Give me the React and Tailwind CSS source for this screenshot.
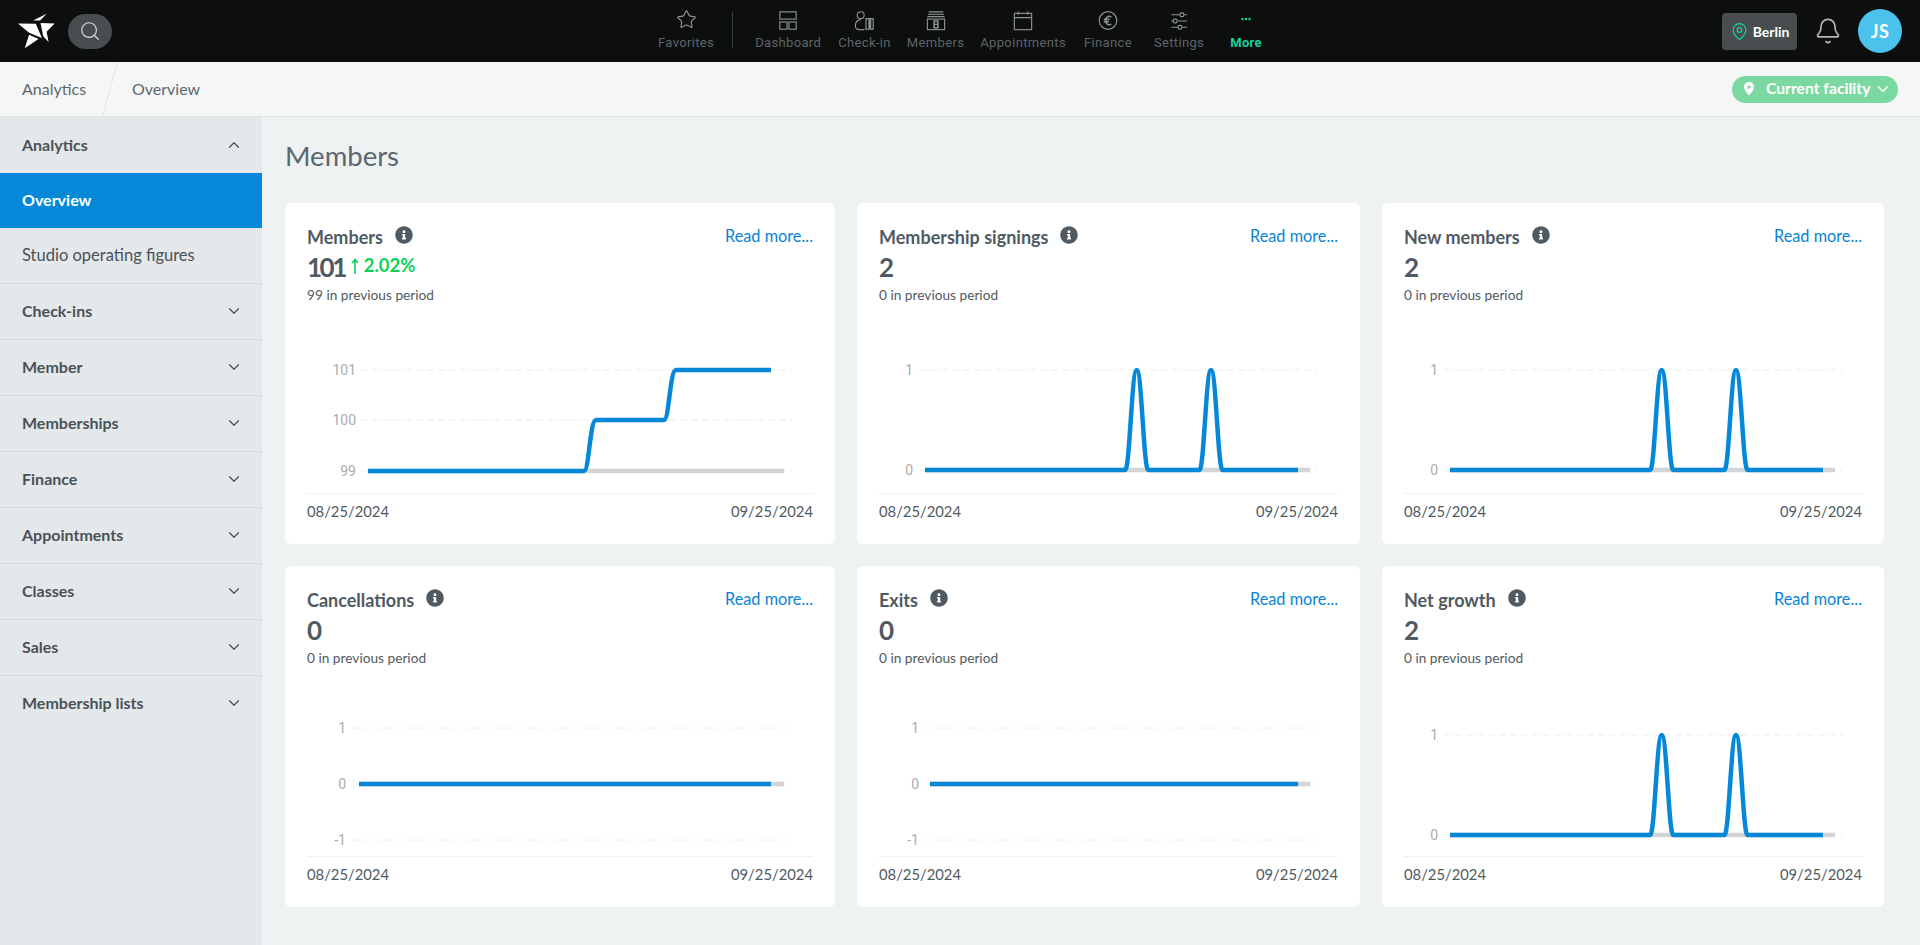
import { Star, ChevronDown, ChevronUp, Search, Bell, MapPin } from 'lucide-react';
import { FaInfoCircle } from 'react-icons/fa';

const sans = "font-['Lato','Noto_Sans',sans-serif]";

const stepLine = (x0, x1, y0, y1, y2) =>
  `M61 ${y0} L${x0} ${y0} C${x0 + 5} ${y0} ${x0 + 6} ${y1} ${x0 + 12} ${y1} L${x1} ${y1} C${x1 + 5} ${y1} ${x1 + 6} ${y2} ${x1 + 12} ${y2} L464 ${y2}`;

const spike = (c, top, base) =>
  `L${c - 11.5} ${base} C${c - 7} ${base} ${c - 5} ${top} ${c} ${top} C${c + 5} ${top} ${c + 7} ${base} ${c + 11.5} ${base}`;

const spikes = (top, base) =>
  `M46 ${base} ${spike(257.7, top, base)} ${spike(332, top, base)} L419 ${base}`;

const cards = [
  {
    title: 'Members',
    value: '101',
    delta: '2.02%',
    prev: '99 in previous period',
    chart: {
      labels: [['101', 64], ['100', 114], ['99', 165]],
      labelEnd: 49, gridStart: 54, gridEnd: 485, lineStart: 61, greyEnd: 477, base: 165,
      d: stepLine(277, 357, 165, 114, 64),
    },
  },
  {
    title: 'Membership signings',
    value: '2',
    prev: '0 in previous period',
    chart: {
      labels: [['1', 64], ['0', 164]],
      labelEnd: 34, gridStart: 40, gridEnd: 439, lineStart: 46, greyEnd: 431, base: 164,
      d: spikes(64, 164),
    },
  },
  {
    title: 'New members',
    value: '2',
    prev: '0 in previous period',
    chart: {
      labels: [['1', 64], ['0', 164]],
      labelEnd: 34, gridStart: 40, gridEnd: 439, lineStart: 46, greyEnd: 431, base: 164,
      d: spikes(64, 164),
    },
  },
  {
    title: 'Cancellations',
    value: '0',
    prev: '0 in previous period',
    chart: {
      labels: [['1', 59], ['0', 115], ['-1', 171]],
      labelEnd: 39, gridStart: 45, gridEnd: 481, lineStart: 52, greyEnd: 477, base: 115,
      d: 'M52 115 L464 115',
    },
  },
  {
    title: 'Exits',
    value: '0',
    prev: '0 in previous period',
    chart: {
      labels: [['1', 59], ['0', 115], ['-1', 171]],
      labelEnd: 40, gridStart: 45, gridEnd: 439, lineStart: 51, greyEnd: 431, base: 115,
      d: 'M51 115 L419 115',
    },
  },
  {
    title: 'Net growth',
    value: '2',
    prev: '0 in previous period',
    chart: {
      labels: [['1', 66], ['0', 166]],
      labelEnd: 34, gridStart: 40, gridEnd: 439, lineStart: 46, greyEnd: 431, base: 166,
      d: spikes(66, 166),
    },
  },
];

const navIcons = {
  dashboard: (
    <>
      <rect x="4" y="2.5" width="17" height="7.5" />
      <rect x="4" y="13" width="7.5" height="7.5" />
      <rect x="13.5" y="13" width="7.5" height="7.5" />
    </>
  ),
  checkin: (
    <>
      <circle cx="8" cy="6" r="3.6" />
      <path d="M8 10.5 C3 11 2.5 14 2.5 17 C2.5 20 4 21 7 21 L12 21" />
      <path d="M13.5 9.5 h7.5 v11 h-7.5 z" />
      <rect x="16" y="10" width="3" height="10" fill="currentColor" stroke="none" />
    </>
  ),
  members: (
    <>
      <path d="M5 2.5 h15 M4 5 h17 M3.5 7.5 h18" />
      <rect x="3.5" y="10" width="18" height="11" />
      <rect x="10.5" y="12" width="4" height="7" fill="none" strokeWidth="1.6" />
      <path d="M10.5 15.5 h4" strokeWidth="1.4" />
    </>
  ),
  calendar: (
    <>
      <rect x="3.5" y="4" width="18" height="17" />
      <path d="M3.5 8.5 h18 M7.5 2 v3.5 M17.5 2 v3.5" />
    </>
  ),
  finance: (
    <>
      <circle cx="12.5" cy="11.5" r="9.2" />
      <path d="M16 7.8 C12.5 6 10 8 10 11.5 C10 15 12.5 17 16 15.2 M8 10.3 h6 M8 12.7 h5.5" strokeWidth="1.6" />
    </>
  ),
  settings: (
    <>
      <path d="M4.5 5.5 h9 M18 5.5 h3 M4.5 12 h2 M11 12 h10 M4.5 18.5 h7 M16 18.5 h5" />
      <rect x="13.5" y="3.5" width="4" height="4" rx="1.5" />
      <rect x="6.5" y="10" width="4" height="4" rx="1.5" />
      <rect x="11.5" y="16.5" width="4" height="4" rx="1.5" />
    </>
  ),
};

const navItems = [
  ['Dashboard', 'dashboard', ''],
  ['Check-in', 'checkin', 'ml-[17px]'],
  ['Members', 'members', 'ml-[16px]'],
  ['Appointments', 'calendar', 'ml-[16px]'],
  ['Finance', 'finance', 'ml-[18px]'],
  ['Settings', 'settings', 'ml-[22px]'],
];

const sideItems = ['Check-ins', 'Member', 'Memberships', 'Finance', 'Appointments', 'Classes', 'Sales', 'Membership lists'];

const NavLabel = ({ children, className = 'text-[#5d6468]' }) => (
  <span className={`font-['Roboto',sans-serif] text-[13px] tracking-[0.35px] leading-4 mt-[5px] ${className}`}>{children}</span>
);

const Chart = ({ chart }) => (
  <svg className="block w-full h-[187px]">
    {chart.labels.map(([label, y]) => (
      <g key={label}>
        <line x1={chart.gridStart} x2={chart.gridEnd} y1={y} y2={y} stroke="#eceeef" strokeWidth="1" strokeDasharray="7 4" />
        <text x={chart.labelEnd} y={y + 5} textAnchor="end" fontSize="14" fontFamily="Roboto, sans-serif" fill="#a9acaf">
          {label}
        </text>
      </g>
    ))}
    <line x1={chart.lineStart} x2={chart.greyEnd} y1={chart.base} y2={chart.base} stroke="#d2d4d6" strokeWidth="4.5" />
    <path d={chart.d} fill="none" stroke="#0588d8" strokeWidth="4.5" strokeLinejoin="round" />
  </svg>
);

const Card = ({ card }) => (
  <div className="h-[341px] bg-white rounded-md px-[22px] pt-[22px] flex flex-col">
    <div className="flex justify-between h-6 items-center">
      <div className="flex items-center">
        <span className="text-[18px] font-bold text-[#505a62] mt-px">{card.title}</span>
        <FaInfoCircle className="ml-3 -mt-1 text-[#505a62]" size={18} />
      </div>
      <a className="text-[16.3px] text-[#0a84d6] -mt-0.5">Read more...</a>
    </div>
    <div className="flex items-center h-8 mt-0.5">
      <span className={`text-[26px] font-bold text-[#505a62] ${card.delta ? 'tracking-[-2.5px]' : ''}`}>{card.value}</span>
      {card.delta && (
        <span className="flex items-center text-[18.5px] font-bold text-[#10d05c] ml-[5px] -mt-0.5">
          <svg width="10" height="17" viewBox="0 0 10 17" className="mr-[4px]">
            <path d="M5 16 V2 M2 5 L5 1.5 L8 5" fill="none" stroke="currentColor" strokeWidth="1.6" />
          </svg>
          {card.delta}
        </span>
      )}
    </div>
    <div className="h-5 mt-0.5 mb-px flex items-center text-[13.7px] text-[#505a62]">{card.prev}</div>
    <Chart chart={card.chart} />
    <div className="border-t border-[#eef0f1] flex justify-between pt-2 text-[14.8px] leading-[18px] text-[#505a62]">
      <span>08/25/2024</span>
      <span>09/25/2024</span>
    </div>
  </div>
);

export default function App() {
  return (
    <div className={`h-screen flex flex-col overflow-hidden bg-[#eff2f3] ${sans}`}>
      <header className="h-[62px] shrink-0 bg-[#0d0f0f] flex items-center pl-[18px] pr-[18px]">
        <svg width="37" height="36" viewBox="55 41 110 103" className="shrink-0">
          <path fill="#fff" d="M100 61 L140 41 L121 61 Z" />
          <path fill="#fff" d="M55 70 L108 71 L126 113 L88 98 Z" />
          <path fill="#fff" d="M122 69 L164 70 L140 95 L146 125 L130 108 Z" />
          <path fill="#fff" d="M88 104 L116 116 L75 144 Z" />
        </svg>
        <button className="ml-[13px] w-11 h-[35px] rounded-full bg-[#484e50] flex items-center justify-center text-[#d5d8d8]">
          <Search size={22} strokeWidth={1.3} />
        </button>
        <nav className="ml-[546px] flex items-center h-full -mt-[2px]">
          <div className="flex flex-col items-center">
            <Star size={21} strokeWidth={1.2} className="text-[#9a9e9f]" />
            <NavLabel>Favorites</NavLabel>
          </div>
          <div className="w-px h-9 bg-[#3a3f41] ml-[18px] mr-[22px]" />
          <div className="flex">
            {navItems.map(([label, icon, gap]) => (
              <div key={label} className={`flex flex-col items-center ${gap}`}>
                <svg width="24" height="24" viewBox="0 0 25 24" fill="none" stroke="currentColor" strokeWidth="1.2" className="text-[#8e9293] -mb-[3px]">
                  {navIcons[icon]}
                </svg>
                <NavLabel>{label}</NavLabel>
              </div>
            ))}
            <div className="flex flex-col items-center ml-[26px]">
              <svg width="24" height="24" viewBox="0 0 24 24" fill="#12d39b" className="-mb-[3px]">
                <circle cx="8.5" cy="10" r="1.2" />
                <circle cx="12" cy="10" r="1.2" />
                <circle cx="15.5" cy="10" r="1.2" />
              </svg>
              <NavLabel className="text-[#12d39b] font-bold">More</NavLabel>
            </div>
          </div>
        </nav>
        <div className="ml-auto flex items-center">
          <div className="w-[75px] h-[37px] rounded bg-[#484e50] flex items-center justify-center gap-1 text-white text-[14px] font-bold">
            <MapPin size={19} strokeWidth={1.5} className="text-[#12d39b]" />
            Berlin
          </div>
          <Bell size={28} strokeWidth={1.4} className="ml-[17px] text-[#b5b8b8]" />
          <div className="ml-4 w-11 h-11 rounded-full bg-[#4bc3ec] flex items-center justify-center text-white text-[18px] font-bold tracking-wide">
            JS
          </div>
        </div>
      </header>

      <div className="h-[55px] shrink-0 bg-[#f5f7f6] border-b border-[#dfe4e6] flex items-center pl-[22px] pr-[22px] text-[16px] text-[#5b6770]">
        <span className="w-[65px]">Analytics</span>
        <svg width="16" height="54" viewBox="0 0 16 54" className="ml-[15px] mr-[14px]">
          <path d="M15.5 0 L0.5 54" stroke="#dfe4e6" fill="none" />
        </svg>
        <span>Overview</span>
        <div className="ml-auto h-[27px] w-[166px] rounded-full bg-[#7bd8a0] flex items-center pl-[11px] text-white text-[15.7px] font-bold">
          <svg width="12" height="14" viewBox="0 0 12 14" className="mr-[11px]">
            <path fillRule="evenodd" fill="#fff" d="M6 0 C9 0 11 2.2 11 5 C11 8 8 11 6 13.5 C4 11 1 8 1 5 C1 2.2 3 0 6 0 Z M6 3.4 A1.7 1.7 0 1 0 6 6.8 A1.7 1.7 0 1 0 6 3.4 Z" />
          </svg>
          Current facility
          <ChevronDown size={18} strokeWidth={2} className="ml-1" />
        </div>
      </div>

      <div className="flex flex-1 min-h-0">
        <aside className="w-[262px] shrink-0 bg-[#e4e8ea] text-[16px] text-[#4a5258]">
          <div className="h-[56px] flex items-center justify-between pl-[22px] pr-[19px] font-bold">
            <span>Analytics</span>
            <ChevronUp size={18} strokeWidth={1.6} />
          </div>
          <div className="h-[55px] flex items-center pl-[22px] pb-0.5 bg-[#0588d8] text-white font-bold">Overview</div>
          <div className="h-[55px] flex items-center pl-[22px] text-[16.5px]">Studio operating figures</div>
          {sideItems.map((item) => (
            <div key={item} className="h-[56px] flex items-center justify-between pl-[22px] pr-[19px] pb-0.5 font-bold border-t border-[#d5dadc]">
              <span>{item}</span>
              <ChevronDown size={18} strokeWidth={1.6} />
            </div>
          ))}
        </aside>
        <main className="flex-1 min-w-0 pl-[23px]">
          <h1 className="text-[27.5px] leading-8 text-[#5b6770] mt-[23px]">Members</h1>
          <div className="mt-[31px] grid grid-cols-[550px_503px_502px] gap-x-[22px] gap-y-[22px]">
            {cards.map((card) => (
              <Card key={card.title} card={card} />
            ))}
          </div>
        </main>
      </div>
    </div>
  );
}
